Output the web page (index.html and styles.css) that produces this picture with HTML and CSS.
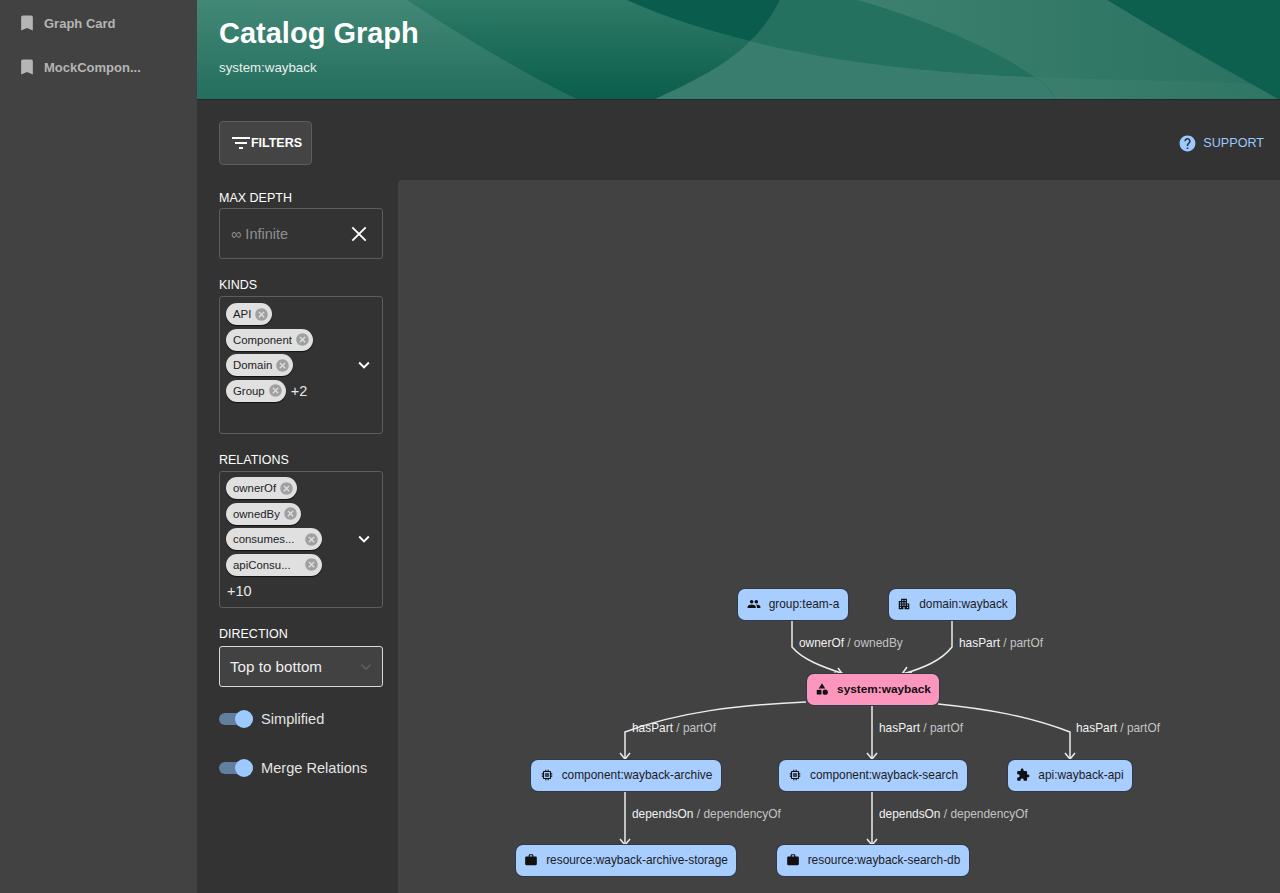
FILE: index.html
```html
<!DOCTYPE html>
<html lang="en">
<head>
<meta charset="utf-8">
<title>Catalog Graph</title>
<link rel="stylesheet" href="styles.css">
</head>
<body>
<div class="app">
  <aside class="sidebar">
    <a class="side-item"><svg class="side-icon" viewBox="0 0 24 24"><path d="M17 3H7c-1.1 0-2 .9-2 2v16l7-3 7 3V5c0-1.1-.9-2-2-2z"/></svg><span>Graph Card</span></a>
    <a class="side-item"><svg class="side-icon" viewBox="0 0 24 24"><path d="M17 3H7c-1.1 0-2 .9-2 2v16l7-3 7 3V5c0-1.1-.9-2-2-2z"/></svg><span>MockCompon...</span></a>
  </aside>
  <div class="page">
    <header class="header">
      <svg class="waves" viewBox="0 0 1083 99" preserveAspectRatio="none">
        <defs>
          <linearGradient id="softGrad" x1="0" y1="0" x2="1" y2="0">
            <stop offset="0" stop-color="#3d8070"/>
            <stop offset="1" stop-color="#2a7260"/>
          </linearGradient>
        </defs>
        <path class="w-light" d="M0 0H210C260 33 320 70 380 99H0Z"/>
        <path class="w-dark" d="M430 0H583C575 16 565 30 553 41C510 30 470 18 430 0Z"/>
        <path class="w-flat" d="M583 0H661C730 20 800 50 837 77C740 73 640 63 553 41C565 30 575 16 583 0Z"/>
        <path class="w-soft" d="M553 41C640 63 740 73 837 77C850 84 855 92 858 99H458C495 82 530 65 553 41Z"/>
        <path class="w-right-dark" d="M910 0H1083V99H1081C1030 70 950 25 910 0Z"/>
        <path class="w-grad" d="M661 0H910C950 25 1030 70 1081 99H858C855 92 850 84 837 77C800 50 730 20 661 0Z"/>
        <path class="w-faint" d="M837 77C920 80 1000 81 1055 84C1063 89 1072 94 1081 99H858C855 92 850 84 837 77Z"/>
      </svg>
      <h1 class="title">Catalog Graph</h1>
      <div class="subtitle">system:wayback</div>
    </header>
    <div class="content">
      <div class="toolbar">
        <button class="filters-btn"><svg class="filter-icon" viewBox="0 0 24 24"><path d="M10 18h4v-2h-4v2zM3 6v2h18V6H3zm3 7h12v-2H6v2z"/></svg>FILTERS</button>
        <a class="support"><svg class="support-icon" viewBox="0 0 24 24"><path d="M12 2C6.48 2 2 6.48 2 12s4.48 10 10 10 10-4.48 10-10S17.52 2 12 2zm1 17h-2v-2h2v2zm2.07-7.75-.9.92C13.45 12.9 13 13.5 13 15h-2v-.5c0-1.1.45-2.1 1.17-2.83l1.24-1.26c.37-.36.59-.86.59-1.41 0-1.1-.9-2-2-2s-2 .9-2 2H8c0-2.21 1.79-4 4-4s4 1.79 4 4c0 .88-.36 1.68-.93 2.25z"/></svg>SUPPORT</a>
      </div>
      <div class="body">
        <div class="filters">
          <div class="field depth-field">
            <div class="label">MAX DEPTH</div>
            <div class="box depth-box">
              <span class="placeholder">∞ Infinite</span>
              <svg class="close-icon" viewBox="0 0 24 24"><path d="M5.3 5.3 18.7 18.7M18.7 5.3 5.3 18.7"/></svg>
            </div>
          </div>
          <div class="field kinds-field">
            <div class="label">KINDS</div>
            <div class="box chips-box kinds-box">
              <div class="chips">
                <span class="chip"><span class="chip-text">API</span><svg class="chip-x" viewBox="0 0 24 24"><path d="M12 2C6.47 2 2 6.47 2 12s4.47 10 10 10 10-4.47 10-10S17.53 2 12 2zm5 13.59L15.59 17 12 13.41 8.41 17 7 15.59 10.59 12 7 8.41 8.41 7 12 10.59 15.59 7 17 8.41 13.41 12 17 15.59z"/></svg></span>
                <span class="chip"><span class="chip-text">Component</span><svg class="chip-x" viewBox="0 0 24 24"><path d="M12 2C6.47 2 2 6.47 2 12s4.47 10 10 10 10-4.47 10-10S17.53 2 12 2zm5 13.59L15.59 17 12 13.41 8.41 17 7 15.59 10.59 12 7 8.41 8.41 7 12 10.59 15.59 7 17 8.41 13.41 12 17 15.59z"/></svg></span>
                <span class="chip"><span class="chip-text">Domain</span><svg class="chip-x" viewBox="0 0 24 24"><path d="M12 2C6.47 2 2 6.47 2 12s4.47 10 10 10 10-4.47 10-10S17.53 2 12 2zm5 13.59L15.59 17 12 13.41 8.41 17 7 15.59 10.59 12 7 8.41 8.41 7 12 10.59 15.59 7 17 8.41 13.41 12 17 15.59z"/></svg></span>
                <span class="chip-row"><span class="chip"><span class="chip-text">Group</span><svg class="chip-x" viewBox="0 0 24 24"><path d="M12 2C6.47 2 2 6.47 2 12s4.47 10 10 10 10-4.47 10-10S17.53 2 12 2zm5 13.59L15.59 17 12 13.41 8.41 17 7 15.59 10.59 12 7 8.41 8.41 7 12 10.59 15.59 7 17 8.41 13.41 12 17 15.59z"/></svg></span><span class="more">+2</span></span>
              </div>
              <svg class="chev" viewBox="0 0 24 24"><path d="M7.41 8.59 12 13.17l4.59-4.58L18 10l-6 6-6-6z"/></svg>
            </div>
          </div>
          <div class="field relations-field">
            <div class="label">RELATIONS</div>
            <div class="box chips-box relations-box">
              <div class="chips">
                <span class="chip"><span class="chip-text">ownerOf</span><svg class="chip-x" viewBox="0 0 24 24"><path d="M12 2C6.47 2 2 6.47 2 12s4.47 10 10 10 10-4.47 10-10S17.53 2 12 2zm5 13.59L15.59 17 12 13.41 8.41 17 7 15.59 10.59 12 7 8.41 8.41 7 12 10.59 15.59 7 17 8.41 13.41 12 17 15.59z"/></svg></span>
                <span class="chip"><span class="chip-text">ownedBy</span><svg class="chip-x" viewBox="0 0 24 24"><path d="M12 2C6.47 2 2 6.47 2 12s4.47 10 10 10 10-4.47 10-10S17.53 2 12 2zm5 13.59L15.59 17 12 13.41 8.41 17 7 15.59 10.59 12 7 8.41 8.41 7 12 10.59 15.59 7 17 8.41 13.41 12 17 15.59z"/></svg></span>
                <span class="chip chip-wide"><span class="chip-text">consumes...</span><svg class="chip-x" viewBox="0 0 24 24"><path d="M12 2C6.47 2 2 6.47 2 12s4.47 10 10 10 10-4.47 10-10S17.53 2 12 2zm5 13.59L15.59 17 12 13.41 8.41 17 7 15.59 10.59 12 7 8.41 8.41 7 12 10.59 15.59 7 17 8.41 13.41 12 17 15.59z"/></svg></span>
                <span class="chip chip-wide"><span class="chip-text">apiConsu...</span><svg class="chip-x" viewBox="0 0 24 24"><path d="M12 2C6.47 2 2 6.47 2 12s4.47 10 10 10 10-4.47 10-10S17.53 2 12 2zm5 13.59L15.59 17 12 13.41 8.41 17 7 15.59 10.59 12 7 8.41 8.41 7 12 10.59 15.59 7 17 8.41 13.41 12 17 15.59z"/></svg></span>
                <span class="more more-line">+10</span>
              </div>
              <svg class="chev" viewBox="0 0 24 24"><path d="M7.41 8.59 12 13.17l4.59-4.58L18 10l-6 6-6-6z"/></svg>
            </div>
          </div>
          <div class="field direction-field">
            <div class="label">DIRECTION</div>
            <div class="select">
              <span>Top to bottom</span>
              <svg class="select-chev" viewBox="0 0 24 24"><path d="M7.41 8.59 12 13.17l4.59-4.58L18 10l-6 6-6-6z"/></svg>
            </div>
          </div>
          <div class="toggle toggle-first"><span class="switch"><span class="thumb"></span></span><span>Simplified</span></div>
          <div class="toggle"><span class="switch"><span class="thumb"></span></span><span>Merge Relations</span></div>
        </div>
        <main class="graph">
          <svg class="edges" viewBox="0 0 882 713">
            <g class="edge">
              <path d="M394 440V467C405 480 425 487 446 494"/><path d="M440 488 445 495 436 493"/>
              <path d="M554 440V467C543 481 525 488 505 494"/><path d="M509 487 504 494 514 492"/>
              <path d="M408 522C340 525 280 532 227 552V579"/><path d="M222 573 227 579 232 573"/>
              <path d="M474 522V579"/><path d="M469 573 474 579 479 573"/>
              <path d="M540 524C590 529 630 536 672 552V579"/><path d="M667 573 672 579 677 573"/>
              <path d="M227 611V665"/><path d="M222 659 227 665 232 659"/>
              <path d="M474 611V665"/><path d="M469 659 474 665 479 659"/>
            </g>
          </svg>
          <span class="edge-label l1"><b>ownerOf</b> / ownedBy</span>
          <span class="edge-label l2"><b>hasPart</b> / partOf</span>
          <span class="edge-label l3"><b>hasPart</b> / partOf</span>
          <span class="edge-label l4"><b>hasPart</b> / partOf</span>
          <span class="edge-label l5"><b>hasPart</b> / partOf</span>
          <span class="edge-label l6"><b>dependsOn</b> / dependencyOf</span>
          <span class="edge-label l7"><b>dependsOn</b> / dependencyOf</span>

          <div class="node n-group"><svg viewBox="0 0 24 24"><path d="M16 11c1.66 0 2.99-1.34 2.99-3S17.66 5 16 5s-3 1.34-3 3 1.34 3 3 3zm-8 0c1.66 0 2.99-1.34 2.99-3S9.66 5 8 5 5 6.34 5 8s1.34 3 3 3zm0 2c-2.33 0-7 1.17-7 3.5V19h14v-2.5c0-2.33-4.67-3.5-7-3.5zm8 0c-.29 0-.62.02-.97.05 1.16.84 1.97 1.97 1.97 3.45V19h6v-2.5c0-2.33-4.67-3.5-7-3.5z"/></svg>group:team-a</div>
          <div class="node n-domain"><svg viewBox="0 0 24 24"><path d="M17 11V3H7v4H3v14h8v-4h2v4h8V11h-4zM7 19H5v-2h2v2zm0-4H5v-2h2v2zm0-4H5V9h2v2zm4 4H9v-2h2v2zm0-4H9V9h2v2zm0-4H9V5h2v2zm4 8h-2v-2h2v2zm0-4h-2V9h2v2zm0-4h-2V5h2v2zm4 12h-2v-2h2v2zm0-4h-2v-2h2v2z"/></svg>domain:wayback</div>
          <div class="node node-root n-system"><svg viewBox="0 0 24 24"><path d="M12 2 6.5 11h11z"/><circle cx="17.5" cy="17.5" r="4.5"/><path d="M3 13.5h8v8H3z"/></svg>system:wayback</div>
          <div class="node n-comp1"><svg viewBox="0 0 24 24"><path d="M15 9H9v6h6V9zm-2 4h-2v-2h2v2zm8-2V9h-2V7c0-1.1-.9-2-2-2h-2V3h-2v2h-2V3H9v2H7c-1.1 0-2 .9-2 2v2H3v2h2v2H3v2h2v2c0 1.1.9 2 2 2h2v2h2v-2h2v2h2v-2h2c1.1 0 2-.9 2-2v-2h2v-2h-2v-2h2zm-4 6H7V7h10v10z"/></svg>component:wayback-archive</div>
          <div class="node n-comp2"><svg viewBox="0 0 24 24"><path d="M15 9H9v6h6V9zm-2 4h-2v-2h2v2zm8-2V9h-2V7c0-1.1-.9-2-2-2h-2V3h-2v2h-2V3H9v2H7c-1.1 0-2 .9-2 2v2H3v2h2v2H3v2h2v2c0 1.1.9 2 2 2h2v2h2v-2h2v2h2v-2h2c1.1 0 2-.9 2-2v-2h2v-2h-2v-2h2zm-4 6H7V7h10v10z"/></svg>component:wayback-search</div>
          <div class="node n-api"><svg viewBox="0 0 24 24"><path d="M20.5 11H19V7c0-1.1-.9-2-2-2h-4V3.5C13 2.12 11.88 1 10.5 1S8 2.12 8 3.5V5H4c-1.1 0-1.99.9-1.99 2v3.8H3.5c1.49 0 2.7 1.21 2.7 2.7s-1.21 2.7-2.7 2.7H2V20c0 1.1.9 2 2 2h3.8v-1.5c0-1.49 1.21-2.7 2.7-2.7 1.49 0 2.7 1.21 2.7 2.7V22H17c1.1 0 2-.9 2-2v-4h1.5c1.38 0 2.5-1.12 2.5-2.5S21.88 11 20.5 11z"/></svg>api:wayback-api</div>
          <div class="node n-res1"><svg viewBox="0 0 24 24"><path d="M20 6h-4V4c0-1.11-.89-2-2-2h-4c-1.11 0-2 .89-2 2v2H4c-1.11 0-1.99.89-1.99 2L2 19c0 1.11.89 2 2 2h16c1.11 0 2-.89 2-2V8c0-1.11-.89-2-2-2zm-6 0h-4V4h4v2z"/></svg>resource:wayback-archive-storage</div>
          <div class="node n-res2"><svg viewBox="0 0 24 24"><path d="M20 6h-4V4c0-1.11-.89-2-2-2h-4c-1.11 0-2 .89-2 2v2H4c-1.11 0-1.99.89-1.99 2L2 19c0 1.11.89 2 2 2h16c1.11 0 2-.89 2-2V8c0-1.11-.89-2-2-2zm-6 0h-4V4h4v2z"/></svg>resource:wayback-search-db</div>
        </main>
      </div>
    </div>
  </div>
</div>
</body>
</html>
```
FILE: styles.css
```css
* { box-sizing: border-box; }
html, body { margin: 0; height: 100%; }
body { background: #333; color: #fff; font-family: "Liberation Sans", Arial, sans-serif; overflow: hidden; }
.app { display: flex; height: 893px; }

.sidebar { width: 197px; flex: none; background: #424242; padding-top: 1px; }
.side-item { display: flex; align-items: center; height: 44px; padding-left: 17px; color: #b5b5b5; font-size: 13px; font-weight: 700; }
.side-icon { width: 20px; height: 20px; fill: #b5b5b5; margin-right: 7px; }

.page { flex: 1; min-width: 0; display: flex; flex-direction: column; }
.header { position: relative; height: 100px; padding: 17px 22px 0; overflow: hidden;
  background: linear-gradient(180deg, #2e7b67 0%, #0b5e4c 100%); flex: none; border-bottom: 1px solid #1f2b28; }
.waves { position: absolute; inset: 0; width: 100%; height: 100%; }
.w-light { fill: #fff; opacity: .1; }
.w-dark { fill: #0a5d4c; }
.w-flat { fill: #25715f; }
.w-soft { fill: #387d6d; }
.w-right-dark { fill: #0e604e; }
.w-grad { fill: url(#softGrad); }
.w-faint { fill: #fff; opacity: .03; }
.title { position: relative; margin: 0; font-size: 29px; line-height: 32px; font-weight: 700; color: #fff; }
.subtitle { position: relative; margin-top: 11px; font-size: 13.3px; line-height: 16px; color: #e8f0ee; }

.content { flex: 1; min-height: 0; display: flex; flex-direction: column; padding: 21px 0 0 22px; }
.toolbar { display: flex; justify-content: space-between; align-items: center; height: 44px; padding-right: 16px; flex: none; }
.filters-btn { display: flex; align-items: center; justify-content: center; width: 93px; height: 44px; padding: 0; border: 1px solid #5c5c5c; border-radius: 4px; background: #444;
  color: #fff; font: 700 12.5px "Liberation Sans", Arial, sans-serif; }
.filter-icon { width: 24px; height: 24px; fill: #fff; margin-right: -2px; }
.support { display: flex; align-items: center; color: #9cc9ff; font-size: 12.6px; }
.support-icon { width: 19px; height: 19px; fill: #9cc9ff; margin-right: 6px; }

.body { flex: 1; min-height: 0; display: flex; margin-top: 15px; }
.filters { width: 164px; flex: none; margin-right: 15px; padding-top: 11px; }
.label { font-size: 12.5px; line-height: 14px; color: #fff; margin-bottom: 4px; }
.depth-field .label { margin-bottom: 3px; }
.direction-field .label { margin-bottom: 5px; }
.box { border: 1px solid #5d5d5d; border-radius: 3px; }
.depth-box { height: 51px; display: flex; align-items: center; justify-content: space-between; padding: 0 11px 0 11px; }
.placeholder { color: #8f8f8f; font-size: 14.5px; }
.close-icon { width: 24px; height: 24px; fill: none; stroke: #fff; stroke-width: 1.9; }
.kinds-field { margin-top: 19px; }
.relations-field { margin-top: 19px; }
.direction-field { margin-top: 19px; }
.chips-box { display: flex; align-items: center; justify-content: space-between; padding: 6px 7px 0 6px; }
.kinds-box { height: 138px; }
.relations-box { height: 137px; padding-top: 5px; }
.chips-box .chev { width: 22px; height: 22px; fill: #fff; margin-top: -6px; }
.chips { align-self: flex-start; display: flex; flex-direction: column; align-items: flex-start; gap: 3.5px; }
.chip-row { display: flex; align-items: center; }
.chip { display: inline-flex; align-items: center; justify-content: space-between; height: 22px; padding: 0 3px 0 7px; border-radius: 11px; background: #e0e0e0; color: #222; font-size: 11.4px; box-shadow: 0 1px 1px #111; }
.chip-wide { width: 96px; }
.chip-x { width: 15px; height: 15px; fill: #a0a0a0; margin-left: 3px; flex: none; }
.more { font-size: 14.5px; color: #e8e8e8; margin-left: 5px; }
.more-line { margin: 3px 0 0 1px; line-height: 18px; }
.select { display: flex; align-items: center; justify-content: space-between; height: 41px; padding: 0 6px 0 10px; border: 1px solid #d9d9d9; border-radius: 3px; background: #424242; color: #eee; font-size: 15.2px; }
.select-chev { width: 20px; height: 20px; fill: #5f5f5f; }
.toggle { display: flex; align-items: center; height: 20px; margin-top: 29px; font-size: 14.6px; color: #e4e4e4; }
.toggle-first { margin-top: 22px; }
.switch { position: relative; width: 34px; height: 12px; border-radius: 6px; background: #627f9f; margin-right: 8px; flex: none; }
.thumb { position: absolute; right: 0; top: -3px; width: 18px; height: 18px; border-radius: 50%; background: #9cc9ff; }

.graph { position: relative; flex: 1; min-width: 0; background: #424242; border-top-left-radius: 4px; }
.edges { position: absolute; inset: 0; width: 882px; height: 713px; }
.edge path { fill: none; stroke: #ececec; stroke-width: 1.5; }
.edge-label { position: absolute; font-size: 11.9px; line-height: 14px; color: #c4c4c4; white-space: nowrap; }
.edge-label b { font-weight: 400; color: #f2f2f2; }
.l1 { left: 401px; top: 456px; }
.l2 { left: 561px; top: 456px; }
.l3 { left: 234px; top: 541px; }
.l4 { left: 481px; top: 541px; }
.l5 { left: 678px; top: 541px; }
.l6 { left: 234px; top: 627px; }
.l7 { left: 481px; top: 627px; }

.node { position: absolute; display: flex; align-items: center; justify-content: center; height: 31px; padding-bottom: 2px; border-radius: 7px; background: #a8cdff; color: #1c1c1c; font-size: 11.9px; white-space: nowrap; box-shadow: 0 0 0 1px #2f3a46; }
.node svg { width: 14px; height: 14px; fill: #111; margin-right: 8px; flex: none; }
.node-root { background: #fd96bd; font-weight: 700; font-size: 11.8px; color: #111; }
.n-group { left: 340px; top: 409px; width: 110px; }
.n-domain { left: 491px; top: 409px; width: 127px; }
.n-system { left: 409px; top: 494px; width: 132px; }
.n-comp1 { left: 133px; top: 580px; width: 190px; }
.n-comp2 { left: 381px; top: 580px; width: 188px; }
.n-api { left: 610px; top: 580px; width: 124px; }
.n-res1 { left: 118px; top: 665px; width: 220px; }
.n-res2 { left: 379px; top: 665px; width: 192px; }
```
